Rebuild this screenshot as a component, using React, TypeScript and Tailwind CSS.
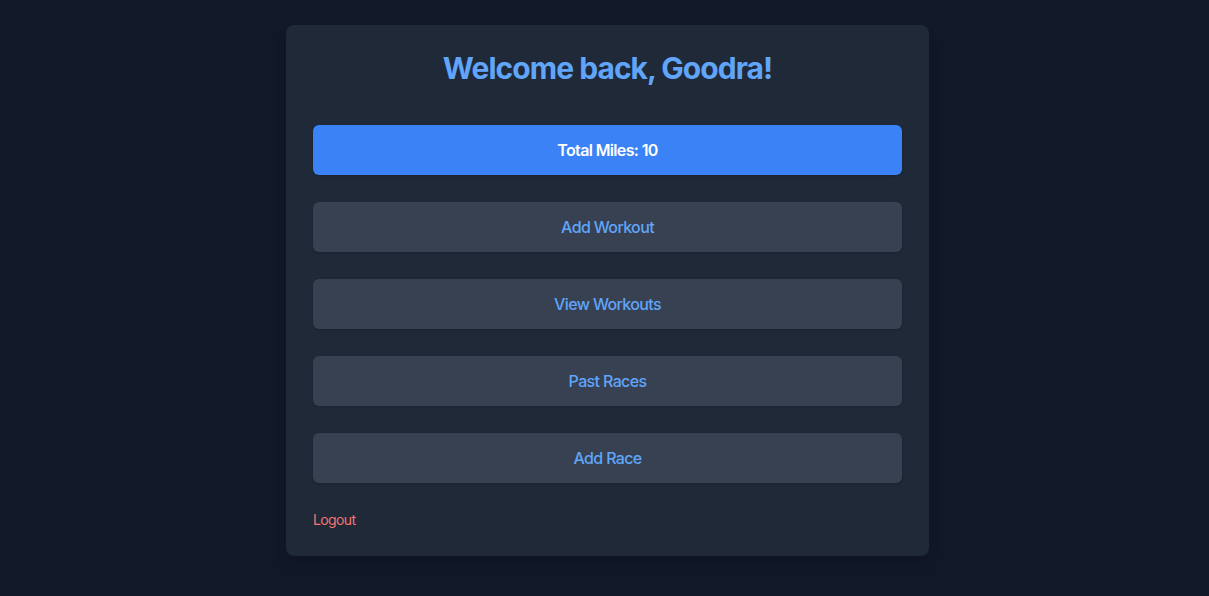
import React from 'react';

const links = ['Add Workout', 'View Workouts', 'Past Races', 'Add Race'];

export default function App() {
  return (
    <div
      className="min-h-screen bg-[#111827] flex justify-center pt-[25px] pl-[6px]"
      style={{ fontFamily: 'Inter, "Noto Sans", sans-serif' }}
    >
      <div className="w-[643px] h-[531px] bg-[#1f2937] rounded-lg shadow-lg pt-[25px] px-[27px]">
        <h1 className="text-center text-[30px] leading-9 font-bold tracking-[-0.032em] text-[#60a5fa] mb-[39px]">
          Welcome back, Goodra!
        </h1>
        <div className="flex flex-col gap-[27px]">
          <div className="h-[50px] rounded-md bg-[#3b82f6] flex items-center justify-center text-white font-semibold text-base tracking-[-0.04em] shadow">
            Total Miles: 10
          </div>
          {links.map((l) => (
            <button
              key={l}
              className="h-[50px] rounded-md bg-[#374151] flex items-center justify-center text-[#60a5fa] font-medium text-base tracking-[-0.04em] shadow"
            >
              {l}
            </button>
          ))}
        </div>
        <button className="mt-[27px] text-sm leading-5 tracking-[-0.045em] text-[#f87171]">Logout</button>
      </div>
    </div>
  );
}
